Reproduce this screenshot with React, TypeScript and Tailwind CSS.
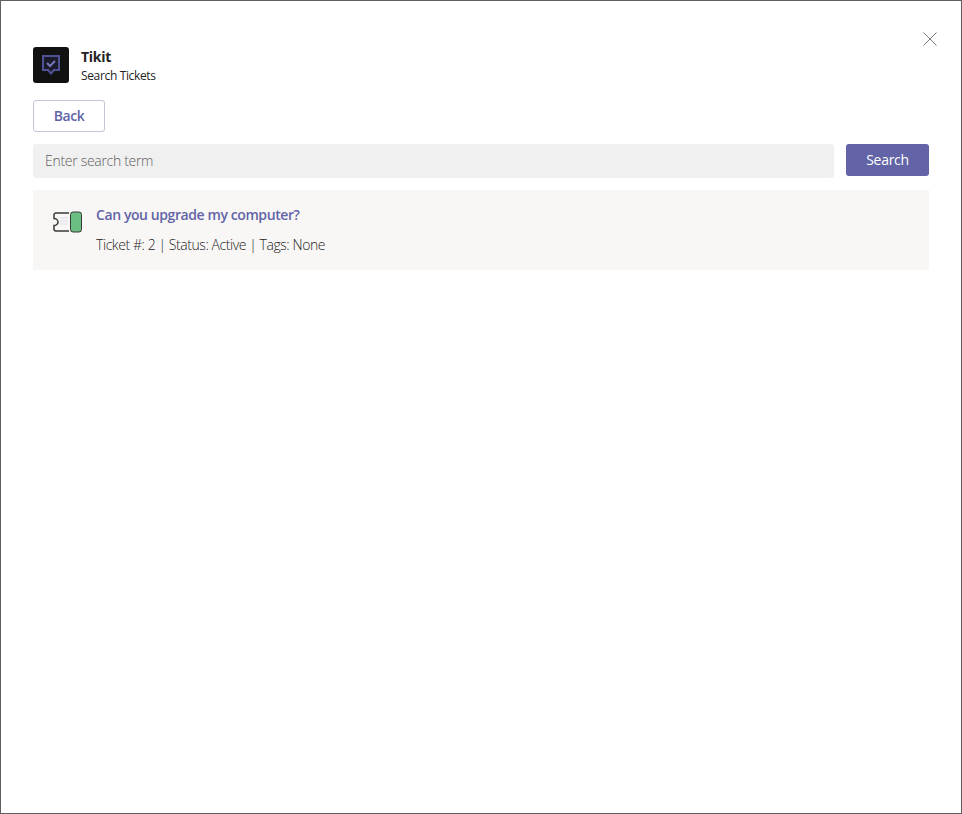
const TicketIcon = () => (
  <svg width="32" height="22" viewBox="0 0 32 22" fill="none">
    <path d="M17 2H3.500a2 2 0 0 0-1.500 1.500V7.500a4 3.500 0 0 1 0 7V18.500a2 2 0 0 0 1.500 1.500H17" stroke="#3b3a39" strokeWidth="1.500" />
    <path d="M8 7h8M8 10h8M8 13h8" stroke="#dcdbe4" strokeWidth="1" />
    <rect x="18.500" y="1" width="11" height="20" rx="2.500" fill="#6bbf82" stroke="#3b3a39" strokeWidth="1" />
  </svg>
);

const LogoIcon = () => (
  <svg width="18" height="20" viewBox="0 0 18 20" fill="none">
    <path d="M1 1h16v14h-5l-3 3.500L6 15H1z" stroke="#4f5196" strokeWidth="2" fill="#1a1a2a" />
    <path d="M5 8l3 3 5-5" stroke="#7476b8" strokeWidth="2" />
  </svg>
);

export default function App() {
  return (
    <div className="w-[962px] h-[814px] bg-white border border-[#5f5f5f] relative font-['Open_Sans',sans-serif] text-[#252423]">
      <button className="absolute top-[31px] right-[24px]">
        <svg width="14" height="14" viewBox="0 0 14 14" fill="none">
          <path d="M0.500 0.500l13 13M13.500 0.500l-13 13" stroke="#7a7a7a" strokeWidth="1" />
        </svg>
      </button>

      <div className="pt-[46px] px-[32px]">
        <div className="flex items-start gap-3 h-9">
          <div className="w-9 h-9 rounded-[3px] bg-[#111111] flex items-center justify-center">
            <LogoIcon />
          </div>
          <div className="pt-px">
            <div className="text-sm leading-[18px] font-bold tracking-[-0.3px]">Tikit</div>
            <div className="text-xs leading-[18px] mt-px tracking-[-0.35px]">Search Tickets</div>
          </div>
        </div>

        <button className="mt-[17px] block w-[72px] h-8 rounded-[3px] border border-[#c4c3d9] text-sm font-semibold text-[#6264a7] tracking-[-0.4px]">
          Back
        </button>

        <div className="mt-3 flex items-start gap-3">
          <div className="flex-1 h-[34px] rounded-[3px] bg-[#f0f0f0] px-3 flex items-center text-sm font-light text-[#605e5c] tracking-[-0.3px]">
            Enter search term
          </div>
          <button className="w-[83px] h-8 rounded-[3px] bg-[#6264a7] text-white text-sm font-medium tracking-[-0.3px]">
            Search
          </button>
        </div>

        <div className="mt-3 h-[80px] bg-[#f8f7f6] flex pl-[19px]">
          <div className="pt-[21px] w-[44px] shrink-0">
            <TicketIcon />
          </div>
          <div className="pt-[15px]">
            <div className="text-sm leading-[20px] font-semibold text-[#6264a7] tracking-[-0.41px]">
              Can you upgrade my computer?
            </div>
            <div className="mt-[10px] text-sm leading-[20px] font-light tracking-[-0.43px]">
              Ticket #: 2 | Status: Active | Tags: None
            </div>
          </div>
        </div>
      </div>
    </div>
  );
}
